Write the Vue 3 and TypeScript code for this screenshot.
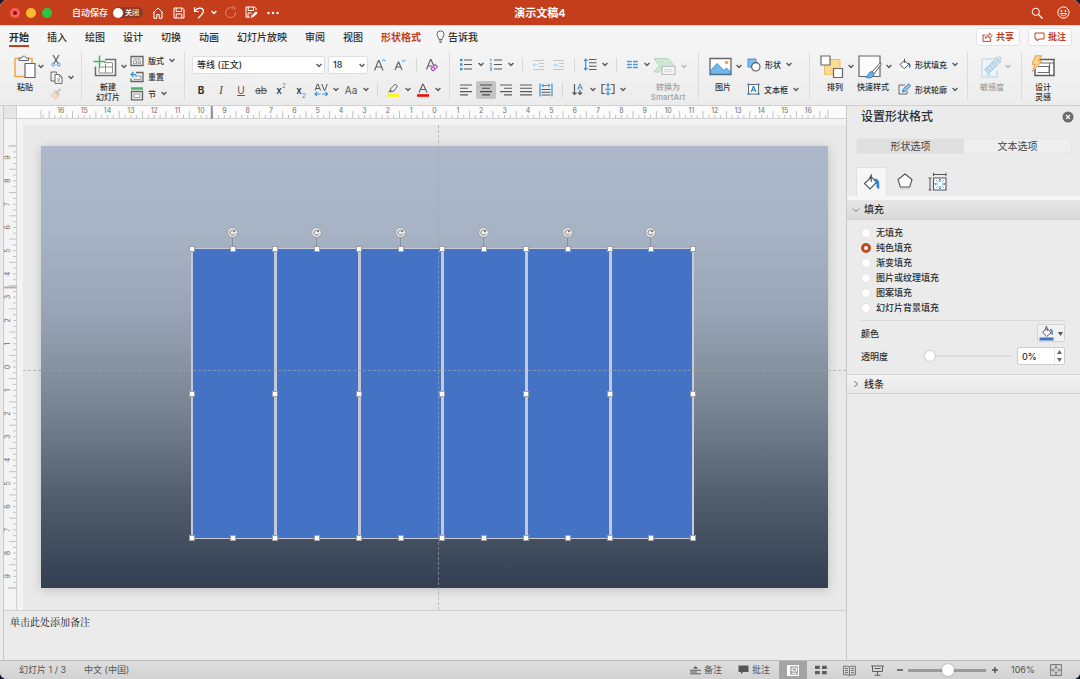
<script setup lang="ts">
import { h, ref } from 'vue'

type Glyph = [number, number, string]

const g = '#5a5a5a'

const glyphs: Record<string, Glyph> = {
  home: [12, 12, '<path d="M1 6 6 1l5 5M2 5v6.300h2.800V7.500h2.400v3.800H10V5" fill="none" stroke="#fff" stroke-linejoin="round"/>'],
  save: [12, 12, '<path d="M1 1h8.500L11 2.500V11H1zM3.200 1v3.500h5.500V1M3.200 11V7h5.600v4" fill="none" stroke="#fff"/>'],
  undo: [13, 13, '<path d="M1.500 1.200v4.300H6M1.800 5.300C4 1.500 9 1 10.300 4c1 2.500-1.300 4.500-5.300 8.300" fill="none" stroke="#fff" stroke-width="1.200"/>'],
  redo: [13, 13, '<path d="M9.300 2.500A5 5 0 1 0 11.500 6M8 .8l3 .3-.4 3" fill="none" stroke="#e2856c"/>'],
  saveEdit: [13, 13, '<path d="M5 11.200H1V1h8.500L11 2.500V4M3.200 1v3.500h5.300V1M3 11V7h3.500" fill="none" stroke="#fff"/><path d="m6 12 .6-2.800 4.500-4 1.600 1.700-4.300 4.200z" fill="#fff"/>'],
  more: [12, 4, '<circle cx="1.500" cy="2" r="1.200" fill="#fff"/><circle cx="6" cy="2" r="1.200" fill="#fff"/><circle cx="10.500" cy="2" r="1.200" fill="#fff"/>'],
  search: [12, 12, '<circle cx="4.800" cy="4.800" r="3.600" fill="none" stroke="#fff"/><path d="m7.500 7.500 4 4" stroke="#fff" stroke-width="1.200"/>'],
  smile: [13, 13, '<circle cx="6.500" cy="6.500" r="5.600" fill="none" stroke="#fff"/><circle cx="4.500" cy="5" r=".9" fill="#fff"/><circle cx="8.500" cy="5" r=".9" fill="#fff"/><path d="M3.500 7.500c1 3 5 3 6 0z" fill="none" stroke="#fff"/>'],
  bulb: [9, 13, '<path d="M3 9.500C3 7.500 1 7 1 4.300a3.500 3.500 0 0 1 7 0C8 7 6 7.500 6 9.500zM3 11h3M3.500 12.500h2" fill="none" stroke="#555" stroke-width=".9"/>'],
  share: [11, 10, '<path d="M3.500 3H1v6.400h7.500V6.500" fill="none" stroke="#c43e1c"/><path d="M3.300 6.500c.3-2.600 1.700-3.500 4-3.500V1l3 2.700-3 2.600V4.700c-2 0-3 .5-4 1.800z" fill="none" stroke="#c43e1c" stroke-width=".9"/>'],
  comment: [11, 10, '<path d="M1 1h9v6H5L3 9V7H1z" fill="none" stroke="#c43e1c"/>'],
  paste: [22, 24, '<path d="M7 3.500H1v18h9.500M14 3.500h4V8" fill="none" stroke="#eda949" stroke-width="1.500"/><path d="M5 5.500V3h2.500C8 .5 11.500.5 12 3h2.500v2.500z" fill="#f6f6f6" stroke="#666"/><path d="M11 8.500h10v14H11z" fill="#fff" stroke="#666" stroke-width="1.200"/>'],
  cut: [10, 13, '<path d="m2 1 4.800 8M8 1 3.200 9" stroke="#555" stroke-width="1.100"/><circle cx="2.300" cy="10.500" r="1.500" fill="none" stroke="#3a92d6"/><circle cx="7.700" cy="10.500" r="1.500" fill="none" stroke="#3a92d6"/>'],
  copy: [13, 13, '<path d="M5 10H1V1h5.500v1.500" fill="none" stroke="#666"/><path d="M5 3.500h4.500L12 6v6.400H5z" fill="#fff" stroke="#666"/><path d="M7 8h3M7 10h3M9.300 3.500V6H12" fill="none" stroke="#777" stroke-width=".8"/>'],
  painter: [12, 12, '<path d="m10.500 1-3 3M5 3l4.200 4" stroke="#c3c3c3" stroke-width="1.800"/><path d="M4.500 4 1 7l4.500 4.500L8.500 8z" fill="#f9dcbf" stroke="#e6c4a5" stroke-width=".8"/>'],
  newSlide: [24, 24, '<path d="M12 4.500h10.500v16h-20v-9" fill="#fff" stroke="#6e6e6e" stroke-width="1.600"/><path d="M6 12h13.500v6H6zM12.500 9v9M11 7.700h8.500V12" fill="none" stroke="#8a8a8a"/><path d="M6.500.5v12M.5 6.500h12" stroke="#47b05f" stroke-width="1.500"/>'],
  layout: [14, 12, '<path d="M1 1.500h12v9H1z" fill="#eee" stroke="#666" stroke-width="1.300"/><path d="M3.500 4h7M3.500 6h3v2.500h-3zM8 6h2.500v2.500H8z" fill="#fff" stroke="#888" stroke-width=".8"/>'],
  reset: [14, 12, '<path d="M6 1.500h7v9H1V7.500" fill="#eee" stroke="#666" stroke-width="1.300"/><path d="M8 5h3v3.500H4V7.500" fill="none" stroke="#888" stroke-width=".8"/><path d="M3.500 1 1 3.400l2.500 2.400M1 3.400h3.300c1.500 0 2 1 2 2.600" fill="none" stroke="#3a92d6" stroke-width="1.200"/>'],
  section: [14, 14, '<path d="M1 1.500h12" stroke="#4cb36a" stroke-width="2.400"/><path d="M1.500 4.500h11v8.300h-11z" fill="#eee" stroke="#666" stroke-width="1.300"/><path d="M4 7h6v3.500H4z" fill="#fff" stroke="#888" stroke-width=".8"/>'],
  growA: [14, 14, '<path d="m1.500 12.500 4-10h.5l4 10M3 9h5.500" fill="none" stroke="#5a5a5a" stroke-width="1.100"/><path d="m9 3.200 1.700-1.500 1.700 1.500" fill="none" stroke="#3a92d6"/>'],
  shrinkA: [14, 14, '<path d="m2 12 3.300-8h.4L9 12M3.200 9h4.700" fill="none" stroke="#5a5a5a" stroke-width="1.100"/><path d="M9 2l1.700 1.500L12.400 2" fill="none" stroke="#3a92d6"/>'],
  eraserA: [14, 14, '<path d="m1.500 11.500 4-10h.5l3 7M3 8h4" fill="none" stroke="#5a5a5a" stroke-width="1.100"/><path d="m6 10.500 4.200-4 2.400 2.300-4.200 3.800H7.500zM8 8.700l2.300 2.300" fill="#f6e9fa" stroke="#a94fc0" stroke-width="1.100"/>'],
  spacing: [15, 14, '<path d="M1 7.500 3.500 1H4l2.500 6.500M1.900 5.500h3.700M7.800 1l2.500 6.500h.5L13.300 1" fill="none" stroke="#5a5a5a"/><path d="M1 11h5.500M3 9 1 11l2 2M8 11h5.500M11.500 9l2 2-2 2" fill="none" stroke="#3a92d6" stroke-width="1.100"/>'],
  marker: [14, 14, '<path d="m4 9 .5-3L9 1.200 11.500 3 8 8z" fill="#eee" stroke="#666"/><path d="m2.500 9.500 2-2.500 2 2" stroke="#666" fill="none"/><path d="M1 12.500h12" stroke="#fdf900" stroke-width="2.600"/>'],
  fontColor: [14, 14, '<path d="m3 9.500 3.700-8.300h.5L11 9.500M4.500 6.500h5" fill="none" stroke="#5a5a5a" stroke-width="1.100"/><path d="M1 12.500h12" stroke="#f50a0a" stroke-width="2.600"/>'],
  bullets: [14, 13, '<path d="M5 2h8M5 6.500h8M5 11h8" stroke="#5a5a5a" stroke-width="1.100"/><path d="M1 .8h2.500v2.500H1zM1 5.300h2.500v2.500H1zM1 9.800h2.500v2.500H1z" fill="#3a92d6"/>'],
  numbers: [14, 13, '<path d="M5 2h8M5 6.500h8M5 11h8" stroke="#5a5a5a" stroke-width="1.100"/><path d="M1 1h1v2.500M.8 5.500h1.700v1L1 7.800h1.700M.8 9.800h1.700v2.400H.8M1 11h1.500" fill="none" stroke="#3a92d6" stroke-width=".8"/>'],
  outdent: [13, 12, '<path d="M1 1.500h11M7 4.500h5M7 7.500h5M1 10.500h11" stroke="#c6c6c6"/><path d="M5.500 6H1.200M3 4.200 1.200 6 3 7.800" fill="none" stroke="#a9cdea"/>'],
  indent: [13, 12, '<path d="M1 1.500h11M7 4.500h5M7 7.500h5M1 10.500h11" stroke="#c6c6c6"/><path d="M.8 6h4.500M3.500 4.200 5.300 6 3.500 7.800" fill="none" stroke="#a9cdea"/>'],
  lines: [14, 13, '<path d="M6 1.500h7.500M6 4.800h7.500M6 8.200h7.500M6 11.500h7.500" stroke="#5a5a5a" stroke-width="1.100"/><path d="M2.700 1.200v10.600M.9 3.200l1.800-2 1.800 2M.9 9.800l1.800 2 1.800-2" fill="none" stroke="#3a92d6" stroke-width="1.200"/>'],
  columns: [11, 9, '<path d="M0 1.500h4.800M0 4.500h4.800M0 7.500h4.800M6 1.500h4.800M6 4.500h4.800M6 7.500h4.800" stroke="#4a9ad8" stroke-width="1.300"/>'],
  smart: [24, 20, '<path d="M1 1.500h14l6 7-3 3.500H9l-2.500 3H1l5.500-6.500z" fill="#cfe6d3" stroke="#b3d5ba"/><path d="M9 9.500h13v8H9z" fill="#f6f6f6" stroke="#bdbdbd" stroke-width="1.200"/><path d="M11.500 12.500h8M11.500 14.700h8" stroke="#d0d0d0"/>'],
  alignL: [12, 12, '<path d="M0 1h12M0 4.300h8M0 7.600h12M0 10.900h8" stroke="#5a5a5a" stroke-width="1.100"/>'],
  alignC: [12, 12, '<path d="M0 1h12M2 4.300h8M0 7.600h12M2 10.900h8" stroke="#4a4a4a" stroke-width="1.100"/>'],
  alignR: [12, 12, '<path d="M0 1h12M4 4.300h8M0 7.600h12M4 10.900h8" stroke="#5a5a5a" stroke-width="1.100"/>'],
  alignJ: [12, 12, '<path d="M0 1h12M0 4.300h12M0 7.600h12M0 10.900h12" stroke="#5a5a5a" stroke-width="1.100"/>'],
  distribute: [14, 14, '<path d="M1 .5v13M13 .5v13" stroke="#3a92d6" stroke-width="1.200"/><path d="M3 2.500h8M4.700.8 3 2.500l1.700 1.700M9.300.8 11 2.500 9.300 4.200" fill="none" stroke="#3a92d6"/><path d="M2.500 6.500h9M2.500 9.300h9M2.500 12h9" stroke="#5a5a5a" stroke-width="1.100"/>'],
  textDir: [13, 13, '<path d="M2.500 1v10.500M.5 9.500l2 2 2-2M8 7v4.500M6 9.500l2 2 2-2" fill="none" stroke="#5a5a5a" stroke-width="1.200"/><path d="m5.800 6.500 2-5.300h.6l2.100 5.300M6.500 4.800h3" fill="none" stroke="#3a92d6"/>'],
  vAlign: [14, 13, '<path d="M4 1.500H1v9h3M10 1.500h3v9h-3" fill="none" stroke="#5a5a5a" stroke-width="1.200"/><path d="M7 .8v11M5.200 2.500 7 .8l1.800 1.700M5.200 10 7 11.800 8.800 10M4 6.200h6" fill="none" stroke="#3a92d6" stroke-width="1.100"/>'],
  picture: [23, 19, '<path d="M1 1.500h21v16H1z" fill="#fff" stroke="#666" stroke-width="1.300"/><path d="M1.700 13.500 8 6.500l7 7 2.500-2.500 4 4v2H1.700z" fill="#76b7ea" stroke="#3b85c0" stroke-width=".9"/><circle cx="17.500" cy="5.500" r="1.700" fill="#f59b45"/>'],
  shapes: [14, 14, '<path d="M1 1h8v8H1z" fill="#7dbcf0" stroke="#4a93d2"/><circle cx="8.800" cy="8.800" r="4.200" fill="#fff" stroke="#555" stroke-width="1.100"/>'],
  textbox: [13, 13, '<path d="M1.500 1.500h10v9.500h-10z" fill="#fff" stroke="#666"/><path d="m4.200 9 2.100-5.500h.5L8.900 9M5 7.200h3.200" fill="none" stroke="#2d86d0" stroke-width="1.200"/><path d="M.4.4h2.200v2.200H.4zM10.400.4h2.200v2.200h-2.200zM.4 9.800h2.200V12H.4zM10.400 9.800h2.200V12h-2.200z" fill="#3a92d6"/>'],
  arrange: [24, 24, '<path d="M4.500 4.500H20v14.800H4.500z" fill="#fcdc95" stroke="#eebd62"/><path d="M1 1h9v9H1zM13.500 13.500h9v9h-9z" fill="#fff" stroke="#666" stroke-width="1.200"/>'],
  quick: [24, 24, '<path d="M1 1h21v20.500H1z" fill="#fbfbfb" stroke="#666" stroke-width="1.200"/><path d="M22.500 7.500 14 17l2.200 1.800 7-9.500z" fill="#fff" stroke="#555"/><path d="M13.800 16.500c-3.500 0-2.300 4-6.300 5.500 3.500 2 8.500.500 8.500-3.500z" fill="#69aee8" stroke="#3b82c4"/>'],
  fill: [13, 13, '<path d="M6.500.8v4M2 6.500l4.500-4 4 4.200-4.300 4z" fill="#fff" stroke="#555"/><path d="M10 5.500c2 0 2 2 1.700 4" fill="none" stroke="#2f5d95" stroke-width="1.400"/><path d="M0 12h12" stroke="#fff" stroke-width="2"/>'],
  outline: [13, 13, '<path d="M7 2H1v9h8V8" fill="none" stroke="#666"/><path d="m4.500 9 .8-3L10.500.9 12.600 3 7.400 8z" fill="#8ec5f2" stroke="#2e7fc4"/>'],
  sensitivity: [22, 24, '<path d="M14 4H1v18h15V15" fill="#eef4f8" stroke="#b9d2e4"/><path d="m4 14.500 9-8.500 3.500 3.700-9 8.500zM6 12.500l3.500 3.700M8.500 10.200l3.500 3.700M11 8l3.500 3.700" fill="#d5e7f4" stroke="#a9cbe4" stroke-width="1.100"/><path d="m13.500 3.500 5 5M15 2l5 5M18 1.500 20.500 4" stroke="#a9cbe4" stroke-width="1.300"/><path d="M5 20h5" stroke="#a9cbe4"/>'],
  ideas: [24, 24, '<path d="M8 4.500h15v16H4V14" fill="#fff" stroke="#5c5c5c" stroke-width="1.500"/><path d="M8 8h15M7 11.500h11v6H6.500M18.500 8v12" fill="none" stroke="#6a6a6a"/><path d="M4.500.8h6L7.500 6H11L1.500 16.500 4 9.300H1z" fill="#fcd58d" stroke="#ee9b3c"/>'],
  bucket: [18, 17, '<path d="m1.500 9.500 7-6.500 5 5.500-6.500 6.500zM5.500 6 8.300 1v7" fill="#fff" stroke="#555" stroke-width="1.100"/><path d="M11.500 5.200c3.500-.2 4.500 1 4.300 9.300-1.500-.3-2-1-1.800-4z" fill="#2e80d2" stroke="#2e80d2"/>'],
  pentagon: [16, 17, '<path d="M8 1 15 6.500 12.700 14H3.300L1 6.500z" fill="#fbfbfb" stroke="#555" stroke-width="1.100"/><path d="M3.500 16h9" stroke="#ccc"/>'],
  size: [19, 19, '<path d="M5.500 6h12.500v12H5.500z" fill="#fff" stroke="#555" stroke-width="1.100"/><path d="M5.500 2.500H18M5.500.8v3.400M18 .8v3.400M2 6v12M.5 6h3M.5 18h3" fill="none" stroke="#555"/><path d="M11.800 7.200v3M10.500 8.300l1.300-1.300 1.300 1.300M11.800 13.800v3M10.500 15.700l1.300 1.300 1.300-1.300M6.800 12h3M8 10.700 6.700 12 8 13.300M13.800 12h3M15.600 10.700l1.300 1.300-1.300 1.300M8 8.200l1.500 1.500M15.600 8.200l-1.500 1.500M8 15.800l1.500-1.500M15.600 15.800l-1.500-1.500" fill="none" stroke="#3a92d6"/>'],
  colorBucket: [15, 16, '<path d="m3.500 7 5-3.500L12 8l-4.500 3.500zM6 5l1.500-4 1.300 5" fill="#f5f5f5" stroke="#666"/><path d="M11 4.500c2.500.3 2.300 2 2 5" fill="none" stroke="#2e80d2" stroke-width="1.600"/><path d="M.5 14h14" stroke="#4472c4" stroke-width="3"/>'],
  notes: [11, 10, '<path d="M0 5.300h11M0 8.800h11M0 7h7" stroke="#5e5e5e"/><path d="M3 3.800 5.500 1 8 3.800z" fill="#5e5e5e"/>'],
  comments: [11, 10, '<path d="M.5.500h10v6.500H5l-2 2.500V7H.5z" fill="#565656"/>'],
  normal: [12, 11, '<path d="M.6.6h10.800v9.800H.6z" fill="#a2a2a2" stroke="#fff" stroke-width="1.100"/><path d="M.6.6h2.600v9.800H.6z" fill="#fff"/><path d="M5 3h4.500v3H5zM5 8.300h4.500" fill="none" stroke="#fff"/>'],
  sorter: [12, 10, '<path d="M0 .8h4.800v3.200H0zM7 .8h4.800v3.200H7zM0 6h4.800v3.200H0zM7 6h4.800v3.200H7z" fill="#5e5e5e"/>'],
  reading: [13, 11, '<path d="M6.500 2v8.500M.6 1.200h4L6.500 2l1.900-.8h4v8.600h-4l-1.900.7-1.900-.7h-4zM2 3.500h3M2 5.500h3M2 7.500h3M8 3.500h3M8 5.500h3M8 7.500h3" fill="none" stroke="#6a6a6a" stroke-width=".9"/>'],
  show: [13, 11, '<path d="M0 1h13M1.500 1v5.500h10V1M3.500 3.500h6M6.500 6.500V10M3.500 10.300h6" fill="none" stroke="#5e5e5e"/>'],
  fit: [12, 12, '<path d="M.6.6h10.800v10.800H.6zM6 1v3M6 8v3M1 6h3M8 6h3M4.500 3 6 4.300 7.500 3M4.500 9 6 7.700 7.500 9M3 4.500 4.300 6 3 7.500M9 4.500 7.700 6 9 7.500" fill="none" stroke="#666" stroke-width=".9"/>'],
  close: [12, 12, '<circle cx="6" cy="6" r="5.500" fill="#6b6b6b"/><path d="m4 4 4 4M8 4 4 8" stroke="#f3f3f3" stroke-width="1.300"/>'],
  rotate: [13, 13, '<circle cx="6.500" cy="6.500" r="4.800" fill="#f1f1f1" stroke="#8d9097" stroke-width=".8"/><path d="M8.300 4.900A2.500 2.500 0 1 0 8.800 7.500M8.800 3.600v2H6.900" fill="none" stroke="#686868" stroke-width=".9"/>'],
}

const Icon = (p: { n: string }) => {
  const [w, ht, markup] = glyphs[p.n]
  return h('svg', { width: w, height: ht, viewBox: `0 0 ${w} ${ht}`, 'aria-hidden': 'true', innerHTML: markup })
}
Icon.props = ['n']

const Chev = (p: { c?: string }) =>
  h('svg', {
    class: 'chev', width: 6, height: 5, viewBox: '0 0 6 5', 'aria-hidden': 'true',
    innerHTML: `<path d="m.6 1 2.400 2.500L5.400 1" fill="none" stroke="${p.c ?? g}" stroke-width="1.400"/>`,
  })
Chev.props = ['c']

const tabs = ['开始', '插入', '绘图', '设计', '切换', '动画', '幻灯片放映', '审阅', '视图', '形状格式']
const fills = ['无填充', '纯色填充', '渐变填充', '图片或纹理填充', '图案填充', '幻灯片背景填充']
const fill = ref('纯色填充')
const opacity = ref(0)
const percent = ref('0%')
const zoom = ref(51)
const fontName = ref('等线 (正文)')
const fontSize = ref('18')
const autosave = ref(false)

const handles = ['nw', 'n', 'ne', 'w', 'e', 'sw', 's', 'se']

interface Tick { at: string; major: boolean; label: string }
// Ticks every quarter centimetre, measured outwards from the middle of the slide.
function ticks(length: number): Tick[] {
  const out: Tick[] = []
  const last = Math.floor(length * 2)
  for (let q = -last; q <= last; q++) {
    out.push({
      at: `${50 + (q / 4 / length) * 100}%`,
      major: Math.abs(q % 4) === 2,
      label: q % 4 === 0 ? String(Math.abs(q / 4)) : '',
    })
  }
  return out
}
const across = ticks(33.7)
const down = ticks(19)
</script>

<template>
  <div class="window">
    <header class="titlebar">
      <div class="left">
        <div class="lights"><i class="red" /><i class="amber" /><i class="green" /></div>
        <label class="auto">自动保存
          <span class="switch"><input v-model="autosave" type="checkbox" role="switch" /><span>关闭</span></span>
        </label>
        <button class="qa" aria-label="主页"><Icon n="home" /></button>
        <button class="qa" aria-label="保存"><Icon n="save" /></button>
        <button class="qa split" aria-label="撤消"><Icon n="undo" /><Chev c="#fff" /></button>
        <button class="qa" aria-label="重做"><Icon n="redo" /></button>
        <button class="qa" aria-label="另存"><Icon n="saveEdit" /></button>
        <button class="qa" aria-label="更多"><Icon n="more" /></button>
      </div>
      <h1>演示文稿4</h1>
      <div class="right">
        <button aria-label="搜索"><Icon n="search" /></button>
        <button aria-label="反馈"><Icon n="smile" /></button>
      </div>
    </header>

    <nav class="tabs">
      <button v-for="(t, i) in tabs" :key="t" :class="{ on: i === 0, context: i === 9 }">{{ t }}</button>
      <button class="tell"><Icon n="bulb" />告诉我</button>
      <span class="grow" />
      <button class="pill"><Icon n="share" />共享</button>
      <button class="pill"><Icon n="comment" />批注</button>
    </nav>

    <section class="ribbon">
      <div class="group clip">
        <button class="big"><span class="pic"><Icon n="paste" /></span><Chev /><span class="cap">粘贴</span></button>
        <div class="stack">
          <button class="tool" aria-label="剪切"><Icon n="cut" /></button>
          <button class="tool split" aria-label="复制"><Icon n="copy" /><Chev /></button>
          <button class="tool" aria-label="格式刷"><Icon n="painter" /></button>
        </div>
      </div>
      <div class="group slides">
        <button class="big wide"><span class="pic"><Icon n="newSlide" /></span><Chev /><span class="cap">新建<br />幻灯片</span></button>
        <div class="stack">
          <button class="named"><Icon n="layout" />版式<Chev /></button>
          <button class="named"><Icon n="reset" />重置</button>
          <button class="named"><Icon n="section" />节<Chev /></button>
        </div>
      </div>
      <div class="group font">
        <div class="rows">
          <div class="row">
            <span class="pick name"><select v-model="fontName" aria-label="字体"><option>等线 (正文)</option></select><Chev /></span>
            <span class="pick num"><select v-model="fontSize" aria-label="字号"><option>18</option></select><Chev /></span>
            <button class="tool" aria-label="增大字号"><Icon n="growA" /></button>
            <button class="tool" aria-label="减小字号"><Icon n="shrinkA" /></button>
            <i class="bar" />
            <button class="tool" aria-label="清除格式"><Icon n="eraserA" /></button>
          </div>
          <div class="row">
            <button class="tool letter"><b>B</b></button>
            <button class="tool letter it"><i>I</i></button>
            <button class="tool letter light"><u>U</u></button>
            <button class="tool letter light"><s>ab</s></button>
            <button class="tool letter">x<sup>2</sup></button>
            <button class="tool letter">x<sub>2</sub></button>
            <button class="tool split" aria-label="字符间距"><Icon n="spacing" /><Chev /></button>
            <button class="tool split letter light"><span>Aa</span><Chev /></button>
            <i class="bar" />
            <button class="tool split" aria-label="突出显示"><Icon n="marker" /><Chev /></button>
            <button class="tool split" aria-label="字体颜色"><Icon n="fontColor" /><Chev /></button>
          </div>
        </div>
      </div>
      <div class="group para">
        <div class="rows">
          <div class="row">
            <button class="tool split" aria-label="项目符号"><Icon n="bullets" /><Chev /></button>
            <button class="tool split" aria-label="编号"><Icon n="numbers" /><Chev /></button>
            <i class="bar" />
            <button class="tool" aria-label="减少缩进"><Icon n="outdent" /></button>
            <button class="tool" aria-label="增加缩进"><Icon n="indent" /></button>
            <i class="bar" />
            <button class="tool split" aria-label="行距"><Icon n="lines" /><Chev /></button>
            <i class="bar" />
            <button class="tool split" aria-label="分栏"><Icon n="columns" /><Chev /></button>
          </div>
          <div class="row">
            <button class="tool" aria-label="左对齐"><Icon n="alignL" /></button>
            <button class="tool active" aria-label="居中"><Icon n="alignC" /></button>
            <button class="tool" aria-label="右对齐"><Icon n="alignR" /></button>
            <button class="tool" aria-label="两端对齐"><Icon n="alignJ" /></button>
            <button class="tool" aria-label="分散对齐"><Icon n="distribute" /></button>
            <i class="bar" />
            <button class="tool split" aria-label="文字方向"><Icon n="textDir" /><Chev /></button>
            <button class="tool split" aria-label="对齐文本"><Icon n="vAlign" /><Chev /></button>
          </div>
        </div>
        <button class="big wide" disabled><span class="pic"><Icon n="smart" /></span><Chev c="#b5b5b5" /><span class="cap">转换为<br />SmartArt</span></button>
      </div>
      <div class="group insert">
        <button class="big wide"><span class="pic"><Icon n="picture" /></span><Chev /><span class="cap">图片</span></button>
        <div class="rows">
          <button class="named"><Icon n="shapes" />形状<Chev /></button>
          <button class="named"><Icon n="textbox" />文本框<Chev /></button>
        </div>
      </div>
      <div class="group draw">
        <button class="big wide"><span class="pic"><Icon n="arrange" /></span><Chev /><span class="cap">排列</span></button>
        <button class="big wide"><span class="pic"><Icon n="quick" /></span><Chev /><span class="cap">快速样式</span></button>
        <div class="rows">
          <button class="named"><Icon n="fill" />形状填充<Chev /></button>
          <button class="named"><Icon n="outline" />形状轮廓<Chev /></button>
        </div>
      </div>
      <div class="group sens">
        <button class="big" disabled><span class="pic"><Icon n="sensitivity" /></span><Chev c="#b5b5b5" /><span class="cap">敏感度</span></button>
      </div>
      <div class="group idea">
        <button class="big"><span class="pic"><Icon n="ideas" /></span><span class="cap">设计<br />灵感</span></button>
      </div>
    </section>

    <main class="work">
      <section class="editor">
        <div class="stage">
          <div class="corner" />
          <div class="ruler top">
            <svg>
              <g v-for="t in across" :key="t.at">
                <line :x1="t.at" :x2="t.at" :y1="t.major ? 5 : 9" y2="12" />
                <text v-if="t.label" :x="t.at" y="7">{{ t.label }}</text>
              </g>
              <line x1="0" x2="0" y1="4" y2="15" /><line x1="100%" x2="100%" y1="4" y2="15" />
              <line class="mark" x1="21.700%" x2="21.700%" y1="0" y2="13" />
            </svg>
          </div>
          <div class="ruler side">
            <svg>
              <g v-for="t in down" :key="t.at">
                <line :y1="t.at" :y2="t.at" :x1="t.major ? 5 : 9" x2="12" />
                <svg v-if="t.label" x="0" :y="t.at" class="turn"><text transform="rotate(-90)" x="0" y="6">{{ t.label }}</text></svg>
              </g>
              <line y1="0" y2="0" x1="4" x2="15" /><line y1="100%" y2="100%" x1="4" x2="15" />
              <line class="mark" y1="32%" y2="32%" x1="0" x2="13" />
            </svg>
          </div>
          <div class="canvas">
            <div class="slide">
              <div class="shapes">
                <div v-for="n in 6" :key="n" class="shape" />
              </div>
              <i class="guide v" /><i class="guide h" />
              <div class="shapes over">
                <div v-for="n in 6" :key="n" class="frame">
                  <i v-for="p in handles" :key="p" class="handle" :class="p" />
                  <span class="spin"><Icon n="rotate" /></span>
                </div>
              </div>
            </div>
          </div>
        </div>
        <div class="notes">单击此处添加备注</div>
      </section>

      <aside class="panel">
        <header><h2>设置形状格式</h2><button aria-label="关闭"><Icon n="close" /></button></header>
        <div class="segment"><button class="on">形状选项</button><button>文本选项</button></div>
        <div class="kinds">
          <button class="on" aria-label="填充与线条"><Icon n="bucket" /></button>
          <button aria-label="效果"><Icon n="pentagon" /></button>
          <button aria-label="大小与属性"><Icon n="size" /></button>
        </div>
        <button class="fold"><svg width="8" height="8" viewBox="0 0 8 8"><path d="m1 2.500 3 3 3-3" fill="none" stroke="#777" /></svg>填充</button>
        <div class="body">
          <label v-for="f in fills" :key="f" class="radio"><input v-model="fill" type="radio" name="fill" :value="f" />{{ f }}</label>
          <hr />
          <div class="field"><span>颜色</span><button class="color" aria-label="颜色"><Icon n="colorBucket" /><svg width="5" height="5" viewBox="0 0 5 5"><path d="M0 1h5L2.500 5z" fill="#555" /></svg></button></div>
          <div class="field">
            <label for="opacity">透明度</label>
            <input id="opacity" v-model="opacity" type="range" min="0" max="100" />
            <span class="stepper">
              <input v-model="percent" type="text" aria-label="透明度百分比" />
              <span><button aria-label="增加"><svg width="5" height="4" viewBox="0 0 5 4"><path d="M0 4h5L2.500 0z" fill="#666" /></svg></button><button aria-label="减少"><svg width="5" height="4" viewBox="0 0 5 4"><path d="M0 0h5L2.500 4z" fill="#666" /></svg></button></span>
            </span>
          </div>
        </div>
        <button class="fold closed"><svg width="8" height="8" viewBox="0 0 8 8"><path d="m2.500 1 3 3-3 3" fill="none" stroke="#666" /></svg>线条</button>
      </aside>
    </main>

    <footer class="status">
      <span>幻灯片 1 / 3</span><span class="lang">中文 (中国)</span>
      <span class="grow" />
      <button class="txt"><Icon n="notes" />备注</button>
      <button class="txt"><Icon n="comments" />批注</button>
      <button class="view on" aria-label="普通视图"><Icon n="normal" /></button>
      <button class="view" aria-label="幻灯片浏览"><Icon n="sorter" /></button>
      <button class="view" aria-label="阅读视图"><Icon n="reading" /></button>
      <button class="view" aria-label="放映"><Icon n="show" /></button>
      <button class="step" aria-label="缩小"><svg width="8" height="8" viewBox="0 0 8 8"><path d="M1 4h6" stroke="#555" stroke-width="1.500" /></svg></button>
      <input v-model="zoom" type="range" min="0" max="100" aria-label="缩放" />
      <button class="step" aria-label="放大"><svg width="8" height="8" viewBox="0 0 8 8"><path d="M1 4h6M4 1v6" stroke="#555" stroke-width="1.500" /></svg></button>
      <span class="pct">106%</span>
      <button class="view" aria-label="适应窗口"><Icon n="fit" /></button>
    </footer>
  </div>
</template>

<style>
body { background: #10162e; }
</style>

<style scoped>
* { box-sizing: border-box; }
.window {
  display: flex; flex-direction: column; min-height: 100vh; overflow: hidden;
  border-radius: 7px; background: #ebebeb; color: #2e2e2e;
  font-family: Inter, "Noto Sans CJK SC", sans-serif; font-size: 8px; line-height: 10px;
}
button, input, select { font: inherit; color: inherit; }
button { display: flex; align-items: center; padding: 0; border: 0; background: none; }
svg { flex: none; display: block; }
.grow { flex: 1; }
h1, h2 { margin: 0; font-weight: 600; }

.titlebar { display: grid; grid-template-columns: 1fr auto 1fr; align-items: center; height: 25px; background: #c43e1c; color: #fff; }
.titlebar h1 { font-size: 11px; line-height: 16px; }
.titlebar .left { display: flex; align-items: center; }
.titlebar .right { display: flex; justify-content: flex-end; gap: 14px; padding-right: 10px; }
.lights { display: flex; gap: 6px; margin: 0 20px 0 10px; }
.lights i { width: 10px; height: 10px; border-radius: 50%; }
.red { background: radial-gradient(#7e1712 0 20%, #fc5d55 35%); }
.amber { background: #fdbb2f; }
.green { background: #2ac840; }
.auto { display: flex; align-items: center; gap: 5px; margin-right: 4px; font-size: 9px; font-weight: 500; white-space: nowrap; }
.switch { display: flex; align-items: center; width: 30px; height: 11px; border-radius: 6px; background: #8b3a25; font-size: 7px; }
.switch input { appearance: none; width: 10px; height: 10px; margin: 0 2px 0 0; border-radius: 50%; background: #fff; }
.qa { justify-content: center; width: 21px; height: 16px; }
.qa.split { width: 31px; gap: 5px; }

.tabs { display: flex; align-items: center; gap: 18px; height: 24px; padding: 0 8px 2px 9px; background: #f6f5f5; border-top: 1px solid #f3d3ca; font-size: 10px; font-weight: 500; }
.tabs button { height: 20px; white-space: nowrap; }
.tabs .on { border-bottom: 2px solid #c43e1c; border-top: 2px solid transparent; font-weight: 600; }
.tabs .context { color: #c43e1c; font-weight: 700; }
.tabs .tell { gap: 3px; margin-left: -3px; }
.tabs .pill { justify-content: center; gap: 3px; width: 44px; height: 18px; border: 1px solid #e4e2e2; border-radius: 3px; background: #fff; color: #c43e1c; font-size: 9px; font-weight: 700; }
.tabs .pill + .pill { margin-left: -10px; }

.ribbon { display: flex; height: 57px; background: linear-gradient(#f5f4f4, #ececec); border-bottom: 1px solid #cfcfcf; font-weight: 500; }
.group { position: relative; display: flex; flex: none; border-right: 1px solid #dcdcdc; margin: 3px 0 5px; }
.group:last-child { border: 0; }
.clip { width: 82px; padding-left: 14px; }
.slides { width: 103px; padding-left: 10px; }
.font { width: 265px; padding-left: 6px; }
.para { width: 249px; padding-left: 6px; }
.insert { width: 111px; padding-left: 8px; }
.draw { width: 158px; padding-left: 9px; }
.sens { width: 54px; padding-left: 13px; }
.idea { padding-left: 10px; }
.big { display: grid; grid-template-columns: 22px 10px; grid-template-rows: 25px auto; align-content: start; padding-top: 2px; justify-items: center; align-items: center; }
.big.wide { grid-template-columns: 26px 12px; }
.pic { display: flex; }
.big .cap { grid-column: 1; grid-row: 2; margin-top: 3px; text-align: center; white-space: nowrap; line-height: 10px; }
.big.wide .cap { padding-left: 6px; }
.big:disabled { color: #a0a0a0; }
.stack { display: grid; grid-template-rows: 17px 16px 17px; align-items: center; }
.rows { display: grid; grid-template-rows: 25px 25px; align-items: center; align-content: start; }
.row { display: flex; align-items: center; height: 20px; }
.tool { justify-content: center; width: 20px; height: 18px; }
.tool.split { width: 30px; display: grid; grid-template-columns: 20px 10px; justify-items: center; }
.tool.active { background: #c4c4c4; border-radius: 2px; }
.letter { font-size: 10px; line-height: 18px; }
.letter.light { color: #555; font-weight: 400; }
.letter.it { font-family: "Liberation Serif", serif; font-size: 12px; color: #555; }
.letter sup, .letter sub { font-size: 6px; line-height: 6px; color: #3a92d6; }
.letter sup { align-self: start; margin-top: 2px; }
.letter sub { align-self: end; }
.bar { width: 1px; height: 14px; margin: 0 5px 0 6px; background: #d6d6d6; }
.named { gap: 4px; white-space: nowrap; }
.named .chev { margin-left: 1px; }
.insert .rows { margin-left: 2px; }
.draw .rows { margin-left: 3px; }
.pick { position: relative; display: block; height: 18px; }
.pick select { appearance: none; display: block; width: 100%; height: 18px; padding: 0 4px; border: 1px solid #dedede; border-radius: 2px; background: #fff; font-size: 9px; }
.pick .chev { position: absolute; right: 3px; top: 7px; pointer-events: none; }
.name { width: 133px; margin: 0 3px 0 1px; }
.num { width: 40px; margin-right: 2px; }

.work { display: flex; flex: 1; }
.editor { display: flex; flex: 1; flex-direction: column; margin-left: 3px; border-left: 1px solid #c9c9c9; border-right: 1px solid #c9c9c9; }
.stage { display: grid; grid-template: 13px 1fr / 13px 1fr; flex: 1; }
.corner { background: #e6e6e6; border-right: 1px solid #cfcfcf; border-bottom: 1px solid #cfcfcf; }
.ruler { background: #fbfbfb; }
.ruler svg { overflow: visible; width: 100%; height: 100%; }
.ruler line { stroke: #c3c3c3; }
.ruler .mark { stroke: #8f8f8f; stroke-width: 2px; }
.ruler text { font-size: 7px; fill: #6f6f6f; text-anchor: middle; }
.top { padding: 0 18px 0 24px; border-bottom: 1px solid #d0d0d0; }
.side { padding: 27px 0 22px; border-right: 1px solid #d0d0d0; background: #f4f4f4; }
.side .mark { stroke: #b0b0b0; }
.side .turn { width: 12px; height: 12px; }
.canvas { display: flex; padding: 21px 18px 22px 18px; border: solid #f3f3f3; border-width: 6px 0 0 6px; background: #e9e9e9; overflow: hidden; }
.slide { position: relative; flex: 1; background: linear-gradient(#adb9ca, #a6b3c4 20%, #9ba5b8 36%, #85919f 51%, #778292 60%, #515d6c 80%, #333f50); box-shadow: 0 2px 10px rgb(0 0 0 / 18%); }
.shapes { position: absolute; left: 19%; top: 23%; width: 64%; height: 66%; display: grid; grid-template-columns: repeat(6, 1fr); border: 1px solid #c9ccd4; }
.shape { background: #4472c4; border: solid #c4c8d8; border-width: 0 1px; }
.shape + .shape { border-left-width: 2px; }
.over { border-color: transparent; }
.frame { position: relative; }
.handle { position: absolute; width: 6px; height: 6px; margin: -3px; border: 1px solid #9b9ea6; background: #fff; }
.nw, .n, .ne { top: 0; }
.w, .e { top: 50%; }
.sw, .s, .se { top: 100%; }
.nw, .w, .sw { left: 0; }
.n, .s { left: 50%; }
.ne, .e, .se { left: 100%; }
.spin { position: absolute; left: 50%; top: -23px; margin-left: -7px; padding: 0 0 7px; background: linear-gradient(#8b9099, #8b9099) 50% 100% / 1px 8px no-repeat; }
.guide { position: absolute; }
.guide.v { left: 50.400%; top: -21px; bottom: -22px; border-left: 1px dashed rgb(160 163 170 / 65%); }
.guide.h { top: 50.600%; left: -18px; right: -18px; border-top: 1px dashed rgb(160 163 170 / 65%); }
.notes { height: 50px; padding: 5px 6px; border-top: 1px solid #cfcfcf; font-family: "Liberation Serif", "Noto Serif CJK SC", "Noto Sans CJK SC", serif; font-size: 10px; line-height: 14px; color: #111; }

.panel { width: 233px; background: #ebebeb; font-size: 9px; line-height: 15px; font-weight: 500; }
.panel header { display: flex; align-items: center; justify-content: space-between; height: 24px; padding: 0 6px 2px 14px; }
.panel h2 { font-size: 12px; line-height: 16px; font-weight: 500; }
.segment { display: grid; grid-template-columns: 1fr 1fr; margin: 8px 8px 13px 9px; border-radius: 3px; background: #eeeeee; border: 1px solid #e6e6e6; }
.segment button { justify-content: center; height: 14px; font-size: 10px; font-weight: 400; color: #444; }
.segment .on { background: #dfdfdf; }
.kinds { display: flex; padding-left: 9px; border-bottom: 4px solid #f6f6f6; gap: 2px; }
.kinds button { justify-content: center; width: 31px; height: 29px; }
.kinds .on { background: #f6f6f6; border: 1px solid #e0e0e0; border-bottom: 0; }
.fold { gap: 4px; width: 100%; height: 20px; padding-left: 5px; background: linear-gradient(#e6e6e6, #dadada); border-bottom: 1px solid #d2d2d2; font-size: 10px; }
.fold.closed { background: linear-gradient(#f2f2f2, #e8e8e8); border-top: 1px solid #d8d8d8; }
.body { padding: 5px 15px 8px 14px; }
.radio { display: flex; align-items: center; gap: 5px; height: 15px; }
.radio input { appearance: none; width: 10px; height: 10px; margin: 0; border-radius: 50%; background: #fff; border: 1px solid #e2e2e2; }
.radio input:checked { border: 3px solid #c2481f; }
hr { height: 1px; margin: 5px 0 2px; border: 0; background: #d9d9d9; }
.field { display: flex; align-items: center; justify-content: space-between; height: 20px; }
.field + .field { margin-top: 3px; gap: 6px; }
.field label { flex: 1; }
.color { justify-content: center; gap: 4px; width: 28px; height: 18px; border: 1px solid #d4d4d4; border-radius: 2px; background: #f1f1f1; }
input[type="range"] { appearance: none; height: 12px; margin: 0; background: linear-gradient(#dcdcdc, #dcdcdc) 0 50% / 100% 2px no-repeat; }
input[type="range"]::-webkit-slider-thumb { appearance: none; width: 10px; height: 10px; border-radius: 50%; background: #fff; box-shadow: 0 0 2px rgb(0 0 0 / 30%); }
#opacity { width: 86px; }
.stepper { display: flex; width: 48px; height: 18px; border: 1px solid #cccccc; border-radius: 2px; background: #fff; }
.stepper input { flex: 1; min-width: 0; padding: 0 4px; border: 0; background: none; }
.stepper > span { display: grid; grid-template-rows: 1fr 1fr; width: 10px; border-left: 1px solid #e2e2e2; }
.stepper button { justify-content: center; }

.status { display: flex; align-items: center; height: 19px; padding: 0 10px 0 19px; border-top: 1px solid #b9b9b9; background: linear-gradient(#dedede, #d2d2d2); color: #555; font-size: 9px; line-height: 12px; }
.lang { margin-left: 18px; }
.txt { gap: 3px; margin-right: 16px; }
.txt + .txt { margin-right: 9px; }
.view { justify-content: center; width: 28px; height: 18px; }
.view.on { background: #a4a4a4; }
.step { justify-content: center; width: 17px; height: 18px; }
.status input[type="range"] { width: 78px; background: linear-gradient(#9a9a9a, #9a9a9a) 0 50% / 100% 3px no-repeat; }
.status input[type="range"]::-webkit-slider-thumb { width: 12px; height: 12px; }
.pct { width: 39px; padding-left: 8px; }
</style>
